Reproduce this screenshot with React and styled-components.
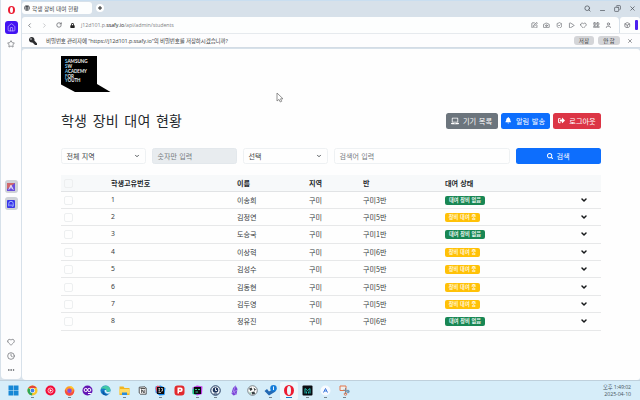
import React from "react";
import styled, { createGlobalStyle } from "styled-components";
import {
  Search, Minus, Copy, X, ChevronLeft, ChevronRight, ChevronDown, RotateCw, Home, Star,
  Heart, Clock, Ellipsis, SquarePen, Camera, ShieldCheck, Play, LayoutGrid, User, Box,
} from "lucide-react";
import { FaLaptop, FaBell, FaSignOutAlt, FaSearch, FaKey, FaGlobe, FaLock } from "react-icons/fa";

const Global = createGlobalStyle`
  *, *::before, *::after { box-sizing: border-box; }
  html, body { margin: 0; overflow: hidden; }
  body {
    font-family: "Noto Sans CJK KR", "Noto Sans", sans-serif;
    color: #25292d;
    white-space: nowrap;
  }
  svg { display: block; flex: none; }
`;

const Desktop = styled.div`
  width: 640px;
  height: 400px;
  display: flex;
  flex-direction: column;
  overflow: hidden;
  background: #d8ebf6;
`;
const Browser = styled.div`
  height: 380px;
  display: flex;
  background: #d7e1ea;
  padding-left: 1px;
`;
const Sidebar = styled.nav`
  width: 20px;
  height: 379px;
  background: #fdfdfe;
  border-radius: 0 0 4px 4px;
  display: flex;
  flex-direction: column;
  align-items: center;
  padding: 6px 0 5px;
  color: #6c6f74;
`;
const OperaMark = styled.div`
  width: ${(p) => p.$w}px;
  height: ${(p) => p.$h}px;
  border: solid #ec1c32;
  border-width: ${(p) => (p.$big ? "1px 3px" : "1px 2px")};
  border-radius: 50%;
`;
const HomeTile = styled.div`
  margin-top: 7px;
  width: 13px;
  height: 13px;
  border-radius: 3px;
  background: #4213f2;
  color: #c9bcff;
  display: grid;
  place-items: center;
`;
const StarSlot = styled.div`
  margin-top: 6px;
`;
const Shortcuts = styled.div`
  margin-top: 132px;
  display: grid;
  gap: 4px;
`;
const Shortcut = styled.div`
  width: 13px;
  height: 13px;
  border-radius: 3px;
  background: #cfd2d8;
  display: grid;
  place-items: center;
`;
const SideTools = styled.div`
  margin-top: auto;
  display: grid;
  gap: 6px;
  justify-items: center;
`;
const Main = styled.div`
  flex: 1;
  display: flex;
  flex-direction: column;
  margin-left: 1px;
  min-width: 0;
`;
const TabBar = styled.div`
  height: 17px;
  display: flex;
  align-items: flex-start;
  padding-top: 1px;
  border-top: 1px solid #c9def0;
`;
const Tab = styled.div`
  width: 70px;
  height: 12px;
  border-radius: 3px;
  background: #fdfefe;
  display: flex;
  align-items: center;
  gap: 2px;
  padding-left: 2px;
  font-size: 5.7px;
  letter-spacing: -0.08px;
  word-spacing: 0.5px;
  color: #404449;
`;
const NewTab = styled.div`
  margin: 2px 0 0 3.500px;
  width: 8px;
  height: 8px;
  border-radius: 50%;
  background: #fff;
  color: #222;
  display: grid;
  place-items: center;
`;
const WindowButtons = styled.div`
  margin: 3px 4px 0 auto;
  display: flex;
  gap: 8px;
  color: #4f555c;
`;
const AddressRow = styled.div`
  height: 16px;
  display: flex;
  gap: 1px;
`;
const AddressBar = styled.div`
  flex: 1;
  background: #fdfefe;
  border-radius: 3px 4px 0 0;
  display: flex;
  align-items: center;
  padding: 0 7px 0 4px;
  color: #5b5f64;
`;
const NavButtons = styled.div`
  display: flex;
  align-items: center;
  gap: 8px;
`;
const Url = styled.div`
  margin-left: 6px;
  font: 5.3px "Open Sans", "Noto Sans", sans-serif;
  letter-spacing: -0.05px;
  color: #7d8185;
  b { font-weight: 400; color: #202326; }
`;
const BarIcons = styled.div`
  margin-left: auto;
  display: flex;
  gap: 5.6px;
`;
const ExtensionPanel = styled.div`
  width: 20px;
  background: #fdfefe;
  border-radius: 3px 3px 0 0;
  display: flex;
  align-items: center;
  justify-content: space-between;
  padding: 0 2px 0 4px;
  color: #5c5f64;
`;
const Accent = styled.div`
  width: 3px;
  height: 10px;
  border-radius: 1px;
  background: #4c20ef;
`;
const PasswordPrompt = styled.div`
  height: 15px;
  background: #fdfdfe;
  border-top: 1px solid #e6eaee;
  border-bottom: 1px solid #d3dce5;
  display: flex;
  align-items: center;
  padding: 0 7px 0 7px;
  color: #2c2d30;
`;
const PromptText = styled.div`
  margin-left: 9px;
  font-family: "Open Sans", "Noto Sans CJK KR", sans-serif;
  font-size: 5.5px;
  letter-spacing: -0.12px;
  color: #3c3e42;
`;
const PromptActions = styled.div`
  margin-left: auto;
  display: flex;
  align-items: center;
  gap: 4px;
  color: #55585d;
`;
const PromptButton = styled.button`
  width: ${(p) => p.$w}px;
  height: 9px;
  padding: 0;
  border: 0;
  border-radius: 3px;
  background: #d4d5d8;
  color: #3c3e42;
  font: 5.6px/8px "Noto Sans CJK KR", sans-serif;
`;
const DismissSlot = styled.div`
  margin-left: 3px;
`;
const Page = styled.main`
  flex: 1;
  margin-top: 1px;
  background: #fefefe;
  border-radius: 3px 3px 3px 4px;
  padding: 7px 39px 0 39px;
`;
const Heading = styled.header`
  height: 17px;
  margin-top: 20px;
  display: flex;
  align-items: center;
  justify-content: space-between;
`;
const Title = styled.h1`
  margin: -2px 0 0;
  font-size: 14px;
  line-height: 16px;
  font-weight: 400;
  letter-spacing: 0.16px;
  word-spacing: 2.3px;
`;
const Actions = styled.div`
  display: flex;
  gap: 3px;
`;
const ActionButton = styled.button`
  width: ${(p) => p.$w}px;
  height: 16px;
  padding: 0;
  border: 0;
  border-radius: 2.5px;
  background: ${(p) => p.$bg};
  color: #fff;
  display: flex;
  align-items: center;
  justify-content: center;
  gap: ${(p) => p.$gap || 4}px;
  font: 7.2px/14px "Noto Sans CJK KR", sans-serif;
  word-spacing: 1px;
`;
const Filters = styled.div`
  margin-top: 19px;
  height: 16px;
  display: grid;
  grid-template-columns: 85px 85px 85px 176px 84.5px;
  column-gap: 6px;
`;
const Field = styled.div`
  height: 16px;
  border: 1px solid ${(p) => (p.$disabled ? "#e3e8ec" : "#eef1f3")};
  border-radius: 2.5px;
  background: ${(p) => (p.$disabled ? "#e8ecef" : "#fefefe")};
  color: ${(p) => (p.$hint ? "#74797e" : "#3d4247")};
  display: flex;
  align-items: center;
  justify-content: space-between;
  padding: 0 5px 0 4.500px;
  font-size: 7px;
  line-height: 13px;
  word-spacing: 0.8px;
`;
const Table = styled.div`
  margin-top: 11px;
`;
const Row = styled.div`
  height: ${(p) => (p.$head ? 16.5 : 17.4)}px;
  display: grid;
  grid-template-columns: 50px 126px 72px 54px 82px 1fr 21px;
  align-items: center;
  border-bottom: 1px solid ${(p) => (p.$head ? "#e1e3e5" : "#e7e8e9")};
  background: ${(p) => (p.$head ? "#f7f9fa" : "transparent")};
  font-size: 7.1px;
  line-height: 14px;
  font-weight: ${(p) => (p.$head ? 700 : 400)};
  color: ${(p) => (p.$head ? "#24282c" : "#383c40")};
  word-spacing: 0.6px;
`;
const Checkbox = styled.div`
  margin: 1px 0 0 3px;
  width: 9px;
  height: 9px;
  border: 1px solid #edeff0;
  border-radius: 2px;
`;
const Num = styled.div`
  font-family: "Noto Sans", sans-serif;
  font-size: 6.8px;
`;
const Badge = styled.span`
  display: block;
  width: ${(p) => (p.$out ? 35 : 40)}px;
  height: 9px;
  margin-top: 1px;
  border-radius: 2px;
  background: ${(p) => (p.$out ? "#ffc107" : "#198754")};
  color: ${(p) => (p.$out ? "#fff6d8" : "#edf7f1")};
  font-size: 5.2px;
  line-height: 8.4px;
  font-weight: 700;
  text-align: center;
`;
const Taskbar = styled.footer`
  height: 20px;
  display: flex;
  align-items: center;
  background: #d6edf9;
  border-top: 1px solid #bfd0dc;
  padding: 0 9px 0 4.8px;
`;
const AppSlot = styled.div`
  width: 18.35px;
  height: 18px;
  display: flex;
  flex-direction: column;
  align-items: center;
  justify-content: center;
  padding-top: 1px;
  gap: 1px;
  border-radius: 2px;
  background: ${(p) => (p.$active ? "#edf7fc" : "transparent")};
  &::after {
    content: "";
    width: ${(p) => (p.$active ? 6 : 3)}px;
    height: 1px;
    background: ${(p) => (p.$active ? "#1676c8" : p.$open ? "#77858e" : "transparent")};
  }
`;
const ClockText = styled.div`
  margin-left: auto;
  text-align: right;
  font-family: "Open Sans", "Noto Sans CJK KR", sans-serif;
  font-size: 5.3px;
  letter-spacing: -0.1px;
  line-height: 7px;
  color: #46555e;
`;
const PointerLayer = styled.div`
  position: absolute;
  left: 276px;
  top: 92px;
`;

function SchoolLogo() {
  const words = ["SAMSUNG", "SW", "ACADEMY", "FOR", "YOUTH"];
  const widths = [22.6, 7, 22, 9, 15.5];
  return (
    <svg width="50" height="36" viewBox="0 0 50 36">
      <path d="M0 0H36V28L49.5 36H14L0 28.5Z" fill="#000" />
      <g fontFamily="Lato, sans-serif" fontWeight="700" fontSize="5.3" fill="#f2f2f2">
        {words.map((w, i) => (
          <text key={w} x="4" y={7.2 + i * 4.8} textLength={widths[i]} lengthAdjust="spacingAndGlyphs">
            <tspan fill="#79c4ec">{w[0]}</tspan>{w.slice(1)}
          </text>
        ))}
      </g>
    </svg>
  );
}

const Icon = ({ children }) => <svg width="11" height="11" viewBox="0 0 22 22">{children}</svg>;

const apps = [
  { icon: <Icon><path d="M1 1h9.5v9.5H1zM11.5 1H21v9.5h-9.5zM1 11.5h9.5V21H1zM11.5 11.5H21V21h-9.5z" fill="#1687d5" /></Icon> },
  { open: true, icon: <Icon><circle cx="11" cy="11" r="10" fill="#f7c52b" /><path d="M11 11L2.3 6A10 10 0 0 0 10 21z" fill="#2da85a" /><path d="M2.3 6A10 10 0 0 1 19.7 6H11z" fill="#e5443a" /><circle cx="11" cy="11" r="5" fill="#fff" /><circle cx="11" cy="11" r="3.8" fill="#3f83ea" /></Icon> },
  { icon: <Icon><circle cx="11" cy="11" r="10" fill="#f30c38" /><circle cx="11" cy="11" r="5" fill="none" stroke="#fff" strokeWidth="1.4" /><path d="M9.4 8.2l4.6 2.8-4.6 2.8z" fill="#fff" /></Icon> },
  { open: true, icon: <Icon><circle cx="11" cy="12" r="9.5" fill="#ff9b22" /><path d="M2 9C1 16 5 21 11 21.500c7 0 11-7 9-14-2 9-9 11-14 6z" fill="#f84a43" /><circle cx="11" cy="11.500" r="4.6" fill="#8a4be0" /><path d="M10 2c5-1 10 3 10 7-4-3-7-3-10-7z" fill="#ffcb36" /></Icon> },
  { icon: <Icon><circle cx="11" cy="11" r="10" fill="#6316b5" /><g fill="none" stroke="#fff" strokeWidth="2"><circle cx="7.500" cy="10" r="3.200" /><circle cx="14.500" cy="10" r="3.200" /></g><path d="M12 17h7" stroke="#fff" strokeWidth="2" /></Icon> },
  { icon: <Icon><circle cx="11" cy="11" r="10" fill="#147cc7" /><path d="M2 8C5-1 20-1 21 10c0 4-6 5-8 3 1-4-5-8-11-5z" fill="#42c9a7" /><path d="M8 11c-3 4 2 10 9 8-5 4-13 1-12-6z" fill="#0b4e9b" /><path d="M9 11c2-2 5 0 4 2 2 2 6 1 8-1l-2 5c-6 1-10-1-10-6z" fill="#d9f1fb" /></Icon> },
  { open: true, icon: <Icon><path d="M1 3h8l2 3h10v14H1z" fill="#f2b51f" /><path d="M1 8h20v9H1z" fill="#ffda62" /><path d="M6 15h10v5H6z" fill="#2b8bd8" /></Icon> },
  { icon: <svg width="9" height="9" viewBox="0 0 22 22"><path d="M3 3l14-1 3 3v15H6l-3-3z" fill="#fff" stroke="#333" strokeWidth="2" /><path d="M6 6h12M9 17V9l6 8V9" fill="none" stroke="#222" strokeWidth="2" /></svg> },
  { open: true, icon: <Icon><path d="M1 3l10-2 10 5-2 14-10 1-8-6z" fill="#1689ed" /><path d="M1 6l4-5 7 3-8 13z" fill="#fb4b62" /><path d="M4 4h14v14H4z" fill="#0b0b0d" /><path d="M7 7h3M8.500 7v5M7 12h3M12 7h3v5h-3M7 15h5" stroke="#fff" strokeWidth="1.300" fill="none" /></Icon> },
  { icon: <Icon><rect x="1" y="1" width="20" height="20" rx="6" fill="#e22a2e" /><path d="M7 5h6a4 4 0 0 1 0 9h-3v3H7z" fill="#fff" /><circle cx="12" cy="9.500" r="1.700" fill="#e22a2e" /></Icon> },
  { open: true, icon: <Icon><path d="M1 5l9-4 11 2-1 15-10 3-9-5z" fill="#c23bea" /><path d="M1 10l4-7 4 17-8-2z" fill="#21d789" /><path d="M4 4h14v14H4z" fill="#0c0b10" /><path d="M6 9h4M12 9h4M7 14h5" stroke="#40e0a0" strokeWidth="1.800" /></Icon> },
  { open: true, icon: <Icon><circle cx="11" cy="11" r="9.500" fill="#f2f7fb" stroke="#1d355c" strokeWidth="2" /><circle cx="11" cy="10" r="5.500" fill="#1d355c" /><path d="M11 6v5h3" stroke="#fff" strokeWidth="1.800" fill="none" /><path d="M7 18h8" stroke="#1d355c" strokeWidth="2" /></Icon> },
  { icon: <Icon><path d="M13 1l4 7-2 11-6 2-4-4 3-11z" fill="#7844d5" /><path d="M13 1L9 12l5 8M5 17l5-4 6-2" stroke="#b89bf3" strokeWidth="1.500" fill="none" /></Icon> },
  { icon: <Icon><circle cx="11" cy="11" r="9.500" fill="#fff" stroke="#555d61" strokeWidth="1.500" /><path d="M4 7l5-2 2 4-4 3zM13 5l5 4-3 3zM9 14l6-1 1 5-6 1z" fill="#363d40" /><path d="M4 13l4 3-1 2z" fill="#43a979" /></Icon> },
  { open: true, icon: <svg width="13" height="11" viewBox="0 0 26 22"><path d="M1 12l5-4 4 5L20 7l3 6-13 8z" fill="#2369b3" /><circle cx="19" cy="6.500" r="6.500" fill="#137bd8" /><path d="M19 3v7" stroke="#fff" strokeWidth="1.800" /></svg> },
  { active: true, icon: <OperaMark $w={10} $h={11} $big /> },
  { open: true, icon: <Icon><rect x="1" y="1" width="20" height="20" rx="2" fill="#090d13" /><path d="M6 17V7l5 4 5-4v10M9 17v-4M13 17v-4" fill="none" stroke="#21b9ae" strokeWidth="2" /></Icon> },
  { open: true, icon: <Icon><circle cx="11" cy="11" r="10" fill="#f6faff" /><path d="M7 15l4-8 4 8M8.500 12h5" fill="none" stroke="#3976dc" strokeWidth="2" /></Icon> },
  { open: true, icon: <Icon><path d="M2 2h12v9H2z" fill="#eef0ef" stroke="#e3764d" strokeWidth="2" /><path d="M9 10l11 3M13 6v12" fill="none" stroke="#7d8994" strokeWidth="2" /><circle cx="18" cy="13" r="2.600" fill="none" stroke="#5b91b8" strokeWidth="1.800" /><circle cx="13" cy="18" r="2.600" fill="none" stroke="#e3764d" strokeWidth="1.800" /></Icon> },
];

const students = [
  ["이송희", "구미3반", false],
  ["김정연", "구미5반", true],
  ["도승국", "구미1반", false],
  ["이상혁", "구미6반", true],
  ["김성수", "구미5반", true],
  ["김동현", "구미5반", true],
  ["김두영", "구미5반", true],
  ["정유진", "구미6반", false],
];

const toolbarIcons = [SquarePen, Camera, ShieldCheck, Play, Heart, LayoutGrid, User];

export default function App() {
  return (
    <Desktop>
      <Global />
      <Browser>
        <Sidebar>
          <OperaMark $w={7} $h={8} />
          <HomeTile><Home size={9} strokeWidth={1.8} /></HomeTile>
          <StarSlot><Star size={8} strokeWidth={2.2} /></StarSlot>
          <Shortcuts>
            <Shortcut>
              <svg width="8" height="8" viewBox="0 0 9 9"><path d="M0 0h9v9H0z" fill="#6a4fdc" /><path d="M0 0h9L0 7z" fill="#d0686c" /><path d="M2 7.500l2.500-5 2.500 5M3.500 5.500h2" stroke="#fff" fill="none" /></svg>
            </Shortcut>
            <Shortcut>
              <svg width="8" height="8" viewBox="0 0 9 9"><rect width="9" height="9" rx="1" fill="#3a35ea" /><path d="M2 7V4a2.500 2.500 0 0 1 5 0v3H5.500V5M3.500 7V5" stroke="#a9c1ff" fill="none" /></svg>
            </Shortcut>
          </Shortcuts>
          <SideTools>
            <Heart size={8} strokeWidth={2.2} />
            <Clock size={8} strokeWidth={2.2} />
            <Ellipsis size={8} strokeWidth={3} />
          </SideTools>
        </Sidebar>
        <Main>
          <TabBar>
            <Tab><FaGlobe size={6} />학생 장비 대여 현황</Tab>
            <NewTab><svg width="4" height="4" viewBox="0 0 4 4"><path d="M2 0v4M0 2h4" stroke="currentColor" strokeWidth="1" /></svg></NewTab>
            <WindowButtons>
              <Search size={7} strokeWidth={2.6} />
              <Minus size={7} strokeWidth={2.4} transform="translate(0 2)" />
              <Copy size={7} strokeWidth={2.4} transform="scale(-1 1)" />
              <X size={7} strokeWidth={2.6} />
            </WindowButtons>
          </TabBar>
          <AddressRow>
            <AddressBar>
              <NavButtons>
                <ChevronLeft size={7} strokeWidth={2.5} />
                <ChevronRight size={7} strokeWidth={2.5} color="#b5b8bb" />
                <RotateCw size={6} strokeWidth={2.8} />
                <FaLock size={5} color="#222" />
              </NavButtons>
              <Url>j12d101.p.<b>ssafy.io</b>/api/admin/students</Url>
              <BarIcons>
                {toolbarIcons.map((Glyph, i) => <Glyph key={i} size={6.800} strokeWidth={2.3} />)}
              </BarIcons>
            </AddressBar>
            <ExtensionPanel><Box size={6.500} strokeWidth={2.4} /><Accent /></ExtensionPanel>
          </AddressRow>
          <PasswordPrompt>
            <FaKey size={8} transform="scale(-1 1)" />
            <PromptText>비밀번호 관리자에 "https://j12d101.p.ssafy.io"의 비밀번호를 저장하시겠습니까?</PromptText>
            <PromptActions>
              <PromptButton $w={20}>저장</PromptButton>
              <PromptButton $w={22}>안 함</PromptButton>
              <DismissSlot><X size={6} strokeWidth={2.4} /></DismissSlot>
            </PromptActions>
          </PasswordPrompt>
          <Page>
            <SchoolLogo />
            <Heading>
              <Title>학생 장비 대여 현황</Title>
              <Actions>
                <ActionButton $w={52} $bg="#6c757d"><FaLaptop size={8} />기기 목록</ActionButton>
                <ActionButton $w={49.5} $bg="#0d6efd"><FaBell size={6.500} />알림 발송</ActionButton>
                <ActionButton $w={48} $bg="#dc3545"><FaSignOutAlt size={7} />로그아웃</ActionButton>
              </Actions>
            </Heading>
            <Filters>
              <Field>전체 지역<ChevronDown size={6} strokeWidth={3.5} /></Field>
              <Field $disabled $hint>숫자만 입력</Field>
              <Field>선택<ChevronDown size={6} strokeWidth={3.5} /></Field>
              <Field $hint>검색어 입력</Field>
              <ActionButton $w={84.5} $bg="#0d6efd" $gap={3}><FaSearch size={6.500} />검색</ActionButton>
            </Filters>
            <Table>
              <Row $head>
                <Checkbox /><div>학생고유번호</div><div>이름</div><div>지역</div><div>반</div><div>대여 상태</div>
              </Row>
              {students.map(([name, group, out], i) => (
                <Row key={name}>
                  <Checkbox /><Num>{i + 1}</Num><div>{name}</div><div>구미</div><div>{group}</div>
                  <Badge $out={out}>{out ? "장비 대여 중" : "대여 장비 없음"}</Badge>
                  <ChevronDown size={8} strokeWidth={4.5} color="#17191b" />
                </Row>
              ))}
            </Table>
          </Page>
        </Main>
      </Browser>
      <Taskbar>
        {apps.map((app, i) => <AppSlot key={i} $open={app.open} $active={app.active}>{app.icon}</AppSlot>)}
        <ClockText>오후 1:49:02<br />2025-04-10</ClockText>
      </Taskbar>
      <PointerLayer>
        <svg width="8" height="11" viewBox="0 0 8 11"><path d="M1 1v8l2-1.600 1.300 2.600 1.400-.7-1.200-2.500H7z" fill="#fff" stroke="#777" strokeWidth=".8" /></svg>
      </PointerLayer>
    </Desktop>
  );
}
